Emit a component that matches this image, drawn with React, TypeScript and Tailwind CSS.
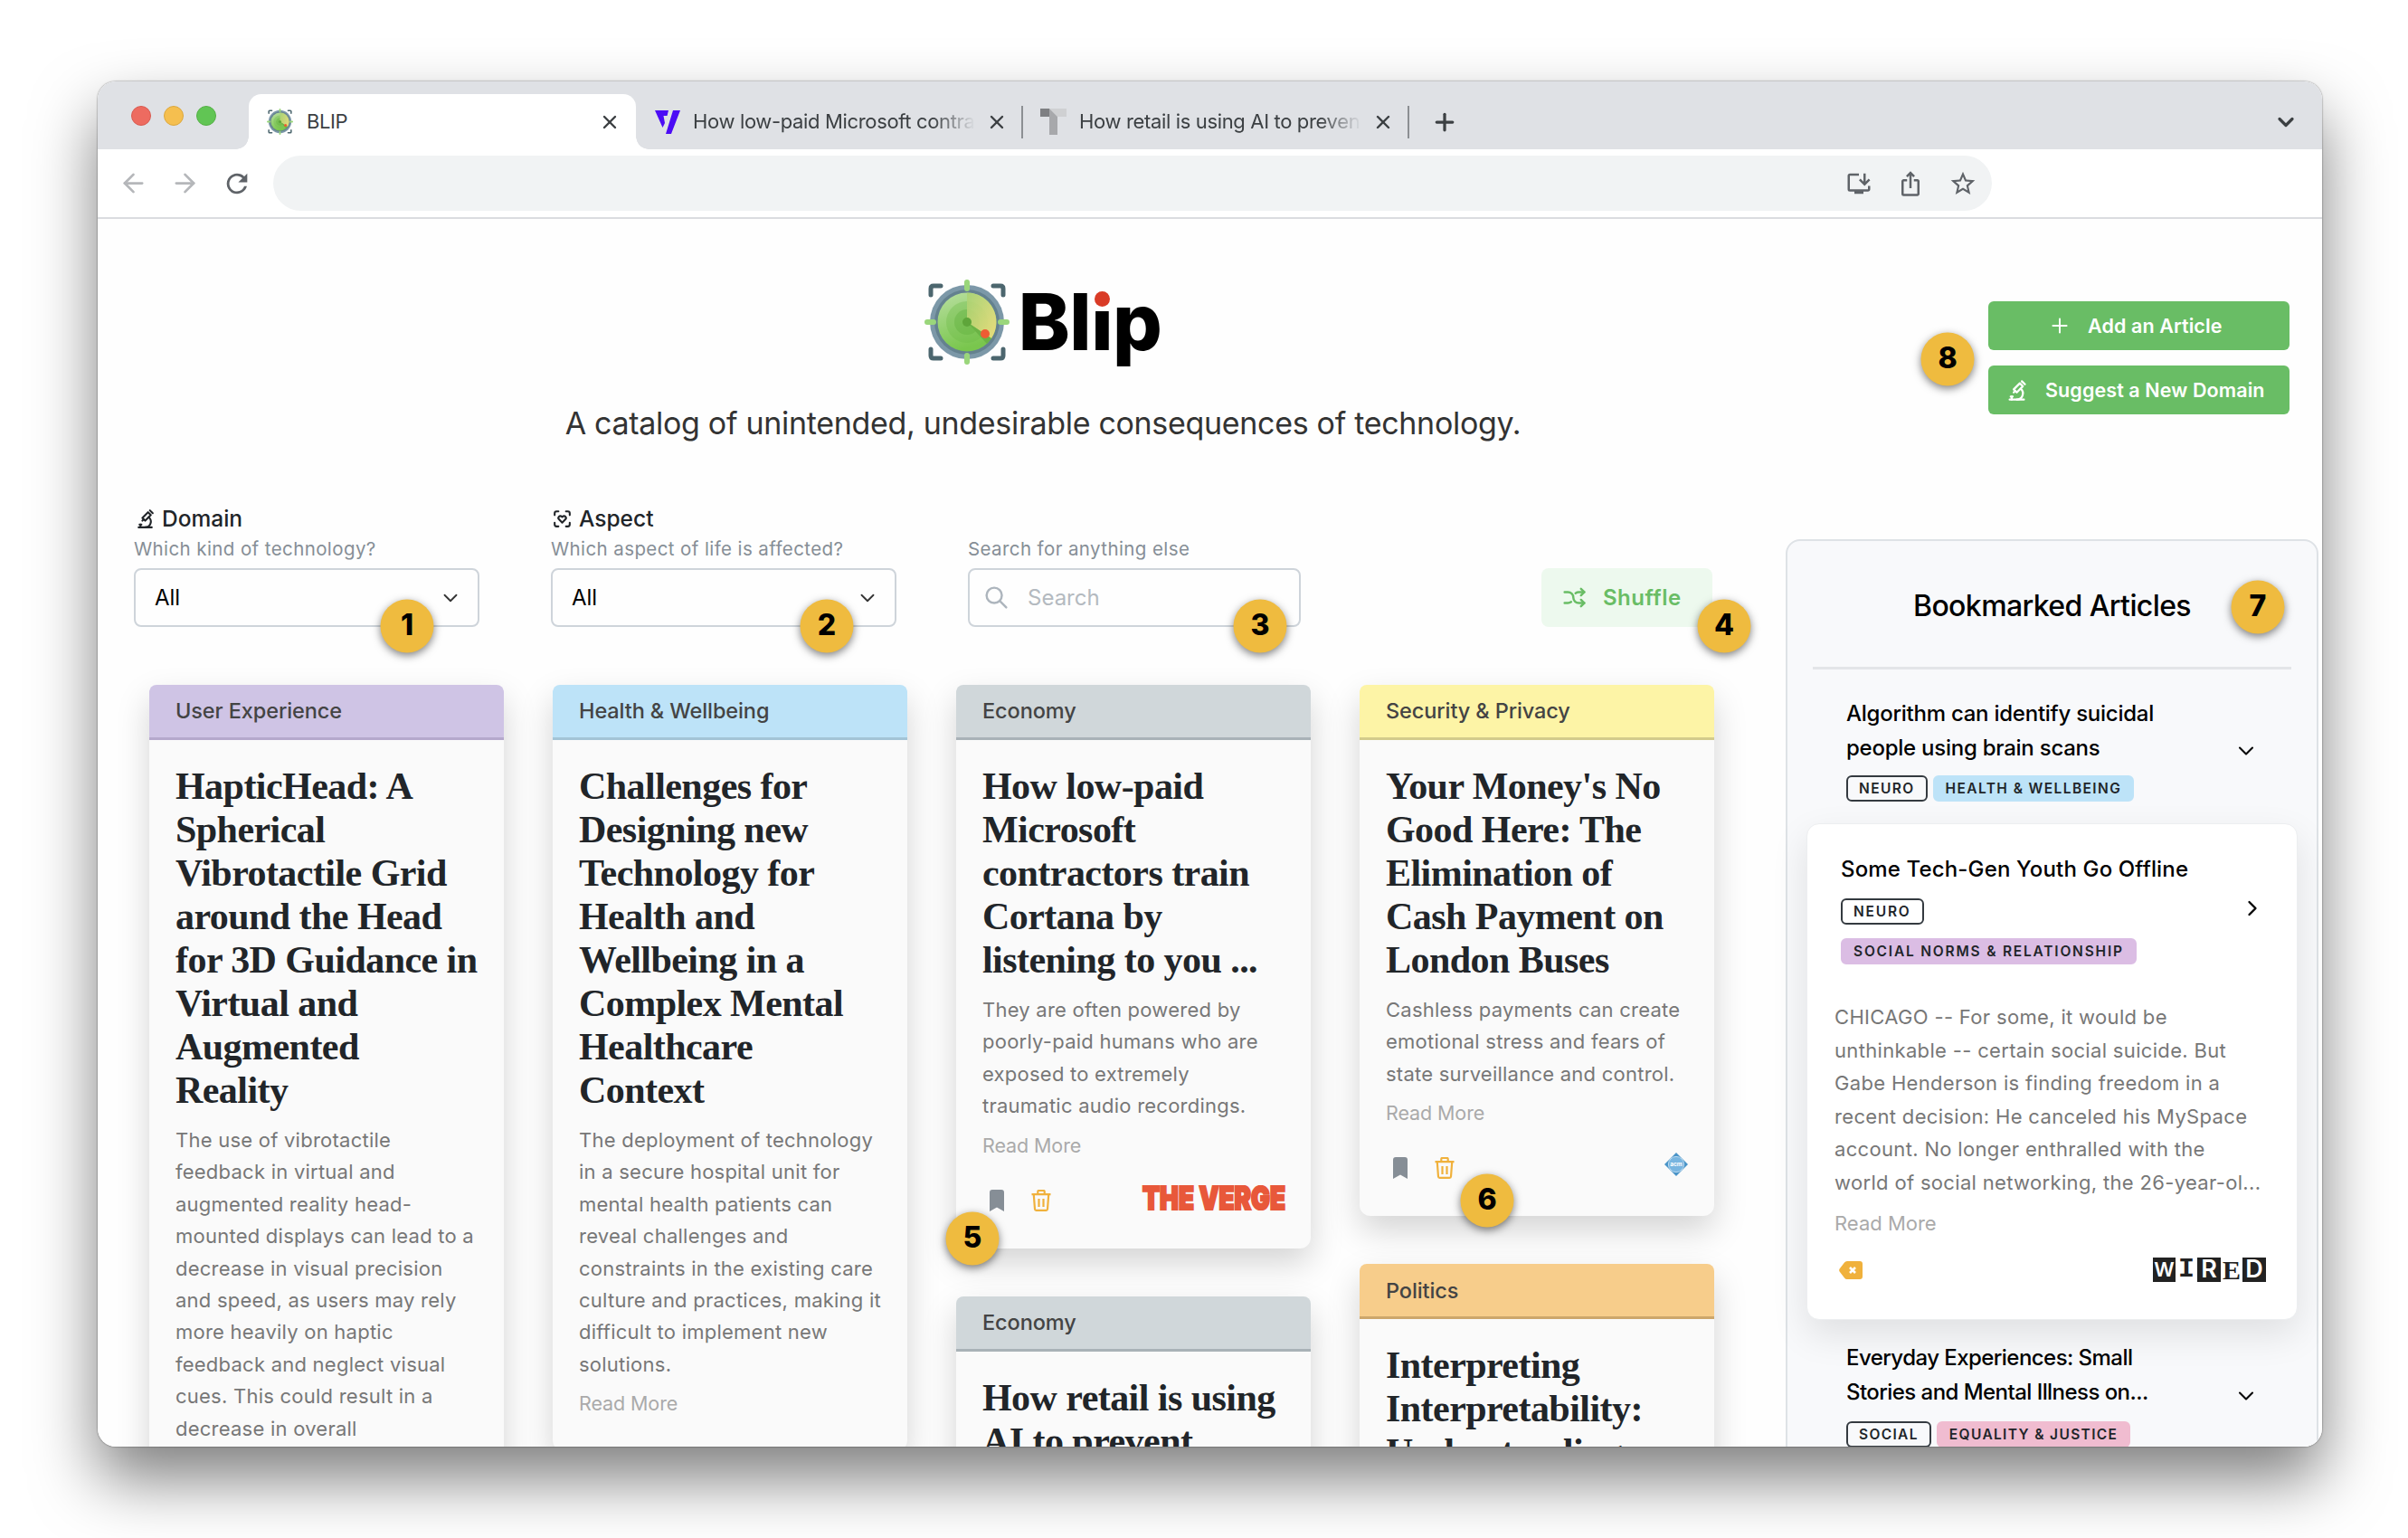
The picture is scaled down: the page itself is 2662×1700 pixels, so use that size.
import type { ReactNode } from "react";
import { MdInstallDesktop, MdIosShare, MdRefresh, MdStarOutline } from "react-icons/md";
import { TbArrowsShuffle, TbHealthRecognition, TbMicroscope, TbSearch } from "react-icons/tb";
import { ArrowLeft, ArrowRight, ChevronDown, ChevronRight, Plus, X } from "lucide-react";

type Article = {
  aspect: string;
  color: string;
  title: string[];
  body?: string[];
  more?: boolean;
  source?: "verge" | "acm";
};

const columns: Article[][] = [
  [
    {
      aspect: "User Experience",
      color: "bg-[#cfc4e5] border-[#b5a8cc]",
      title: ["HapticHead: A", "Spherical", "Vibrotactile Grid", "around the Head", "for 3D Guidance in", "Virtual and", "Augmented", "Reality"],
      body: [
        "The use of vibrotactile",
        "feedback in virtual and",
        "augmented reality head-",
        "mounted displays can lead to a",
        "decrease in visual precision",
        "and speed, as users may rely",
        "more heavily on haptic",
        "feedback and neglect visual",
        "cues. This could result in a",
        "decrease in overall",
      ],
    },
  ],
  [
    {
      aspect: "Health & Wellbeing",
      color: "bg-[#bde3f8] border-[#a3c4d6]",
      title: ["Challenges for", "Designing new", "Technology for", "Health and", "Wellbeing in a", "Complex Mental", "Healthcare", "Context"],
      body: [
        "The deployment of technology",
        "in a secure hospital unit for",
        "mental health patients can",
        "reveal challenges and",
        "constraints in the existing care",
        "culture and practices, making it",
        "difficult to implement new",
        "solutions.",
      ],
      more: true,
    },
  ],
  [
    {
      aspect: "Economy",
      color: "bg-[#d0d7da] border-[#a9b2b7]",
      title: ["How low-paid", "Microsoft", "contractors train", "Cortana by", "listening to you ..."],
      body: ["They are often powered by", "poorly-paid humans who are", "exposed to extremely", "traumatic audio recordings."],
      more: true,
      source: "verge",
    },
    {
      aspect: "Economy",
      color: "bg-[#d0d7da] border-[#a9b2b7]",
      title: ["How retail is using", "AI to prevent"],
    },
  ],
  [
    {
      aspect: "Security & Privacy",
      color: "bg-[#fdf4a6] border-[#d3cb8b]",
      title: ["Your Money's No", "Good Here: The", "Elimination of", "Cash Payment on", "London Buses"],
      body: ["Cashless payments can create", "emotional stress and fears of", "state surveillance and control."],
      more: true,
      source: "acm",
    },
    {
      aspect: "Politics",
      color: "bg-[#f7cd8b] border-[#cda76b]",
      title: ["Interpreting", "Interpretability:", "Understanding"],
    },
  ],
];

const markers = [
  { n: 1, x: 450, y: 692 },
  { n: 2, x: 914, y: 692 },
  { n: 3, x: 1393, y: 692 },
  { n: 4, x: 1906, y: 692 },
  { n: 5, x: 1075, y: 1369 },
  { n: 6, x: 1644, y: 1327 },
  { n: 7, x: 2496, y: 671 },
  { n: 8, x: 2153, y: 397 },
];

function Radar({ className }: { className: string }) {
  return (
    <svg viewBox="0 0 94 94" className={className}>
      <defs>
        <linearGradient id="face" x1="0" y1="0" x2="0.3" y2="1">
          <stop offset="0" stopColor="#b9dfa0" />
          <stop offset="1" stopColor="#79c64d" />
        </linearGradient>
        <linearGradient id="sweep" x1="0" y1="0" x2="1" y2="1">
          <stop offset="0" stopColor="#a8d272" />
          <stop offset="1" stopColor="#fbdf83" />
        </linearGradient>
      </defs>
      <path d="M7 17V10q0-3 3-3h8M76 7h8q3 0 3 3v7M87 77v7q0 3-3 3h-8M18 87h-8q-3 0-3-3v-7" fill="none" stroke="#4c666e" strokeWidth="5" strokeLinecap="round" />
      <circle cx="47" cy="47" r="41" fill="#7c98a8" />
      <circle cx="47" cy="47" r="36" fill="#64818f" />
      <circle cx="47" cy="47" r="32.5" fill="url(#face)" />
      <circle cx="47" cy="47" r="23" fill="#6dbb48" opacity="0.35" />
      <circle cx="47" cy="47" r="14" fill="#5cab3a" opacity="0.35" />
      <path d="M47 14.5A32.5 32.5 0 0 1 74 65L47 47Z" fill="url(#sweep)" opacity="0.85" />
      <path d="M47 47L74 65l-5 6Z" fill="#6bb345" />
      <circle cx="47" cy="47" r="5" fill="#5ea53a" />
      <circle cx="67" cy="60" r="5" fill="#ee5c33" />
      <path d="M47 3v7M47 84v7M3 47h7M84 47h7" stroke="#9ad67b" strokeWidth="6" strokeLinecap="round" />
    </svg>
  );
}

function Bookmark() {
  return (
    <svg viewBox="0 0 16 24" className="ml-2 h-6 w-4">
      <path d="M3 0h10q3 0 3 3v21l-8-4.500L0 24V3q0-3 3-3Z" fill="#868e96" />
    </svg>
  );
}

function Trash() {
  return (
    <svg viewBox="0 0 22 24" className="ml-[30px] h-6 w-[22px]" fill="none" stroke="#f0b13c" strokeWidth="2.200">
      <path d="M0.500 5.200h21M7.300 5V2q0-1 1-1h5.400q1 0 1 1v3M2.800 5.500l1.200 16q.1 1.400 1.500 1.400h11q1.400 0 1.500-1.400l1.200-16M8.500 10v9M13.500 10v9" />
    </svg>
  );
}

function Lines({ lines }: { lines: string[] }) {
  return (
    <>
      {lines.map((l) => (
        <span key={l} className="block whitespace-nowrap">{l}</span>
      ))}
    </>
  );
}

function VergeLogo() {
  return (
    <svg viewBox="0 0 160 28" className="-mt-[5px] -mr-[2px] h-7 w-40">
      <text x="1" y="26.5" textLength="158" lengthAdjust="spacingAndGlyphs" fontFamily="Inter, sans-serif" fontWeight="900" fontSize="35" fill="#e8583a" stroke="#e8583a" strokeWidth="2.4">THE VERGE</text>
    </svg>
  );
}

function AcmLogo() {
  return (
    <svg viewBox="0 0 26 26" className="-mt-[5px] h-[26px] w-[26px]">
      <path d="M13 0L26 13L13 26L0 13Z" fill="#4a94c8" />
      <circle cx="13" cy="13" r="8.6" fill="#78b5e0" stroke="#c5e0f3" strokeWidth="0.9" />
      <text x="13" y="15.4" textAnchor="middle" fontFamily="Inter, sans-serif" fontWeight="700" fontSize="6.5" fill="#fff">acm</text>
    </svg>
  );
}

function ArticleCard({ a }: { a: Article }) {
  return (
    <div className="w-[392px] rounded-t-lg rounded-b-xl bg-[#fafafa] shadow-[0_16px_36px_rgba(0,0,0,0.17)]">
      <div className={`flex h-[61px] items-center rounded-t-lg border-b-[3px] pl-[29px] text-[23.5px] font-medium tracking-[-0.1px] text-[#444] ${a.color}`}>{a.aspect}</div>
      <div className="px-[29px] pt-[27px] pb-10">
        <h2 className="font-['Liberation_Serif',serif] text-[42px]/[48px] font-bold tracking-[-0.55px] text-[#212529]">
          <Lines lines={a.title} />
        </h2>
        {a.body && (
          <p className="mt-[14px] text-[22px]/[35.4px] tracking-[0.24px] text-[#777]">
            <Lines lines={a.body} />
          </p>
        )}
        {a.more && <p className="mt-[12px] text-[21.5px]/[26px] tracking-[-0.1px] text-[#aaa]">Read More</p>}
        {a.source && (
          <div className="mt-9 flex h-[25px] items-start">
            <Bookmark />
            <Trash />
            <div className="ml-auto">{a.source === "verge" ? <VergeLogo /> : <AcmLogo />}</div>
          </div>
        )}
      </div>
    </div>
  );
}

function Tag({ children, className }: { children: string; className: string }) {
  return (
    <span className={`flex h-[29px] items-center rounded-md border-2 text-[15.5px] font-semibold whitespace-nowrap text-[#212529] ${className}`}>{children}</span>
  );
}

function Filter({ icon, label, hint }: { icon: ReactNode; label: string; hint: string }) {
  return (
    <div className="w-[382px]">
      <div className="flex h-[30px] items-center gap-1.5 text-[24.5px] font-medium text-[#212529]">
        {icon}
        {label}
      </div>
      <div className="mb-0.5 h-[38px] text-[20.5px]/[38px] tracking-[0.4px] whitespace-nowrap text-[#868e96]">{hint}</div>
      <div className="flex h-[65px] items-center justify-between rounded-lg border-2 border-[#ced4da] pr-[17px] pl-[21px] text-[24px] text-black">
        All
        <ChevronDown className="h-[26px] w-[26px] text-[#333]" strokeWidth={1.7} />
      </div>
    </div>
  );
}

function TabBar() {
  return (
    <div className="flex h-[75px] items-end bg-[#dfe1e5]">
      <div className="flex h-[74px] w-[167px] items-center gap-[14px] pl-[37px]">
        <span className="h-[22px] w-[22px] rounded-full border border-[#d95a50] bg-[#ed6b60]" />
        <span className="h-[22px] w-[22px] rounded-full border border-[#dca73c] bg-[#f5bf4f]" />
        <span className="h-[22px] w-[22px] rounded-full border border-[#54b045] bg-[#61c554]" />
      </div>
      <div className="relative flex h-[61px] w-[428px] items-center rounded-t-[14px] bg-white pl-[20px] text-[22px] text-[#3c4043]">
        <Radar className="h-[29px] w-[29px]" />
        <span className="ml-[15px] tracking-[-0.4px]">BLIP</span>
        <X className="mr-[17px] ml-auto h-6 w-6" strokeWidth={2.4} />
        <span className="absolute bottom-0 -left-3.5 h-3.5 w-3.5 bg-[radial-gradient(circle_at_0_0,transparent_13.5px,white_14px)]" />
        <span className="absolute -right-3.5 bottom-0 h-3.5 w-3.5 bg-[radial-gradient(circle_at_100%_0,transparent_13.5px,white_14px)]" />
      </div>
      <div className="flex h-[61px] w-[428px] items-center pl-[21px] text-[22px] tracking-[-0.35px] text-[#3c4043]">
        <svg viewBox="0 0 28 26" className="h-[26px] w-7">
          <path d="M0 0h15l-1.500 6h-4l1.500 8-2.500 5ZM20 0h8L18 26h-6Z" fill="#4c0cf5" />
        </svg>
        <span className="ml-[14px] w-[312px] overflow-hidden [mask-image:linear-gradient(to_right,black_85%,transparent)] whitespace-nowrap">How low-paid Microsoft contra</span>
        <X className="ml-[12px] h-6 w-6" strokeWidth={2.4} />
        <span className="ml-auto h-9 w-0.5 bg-[#8c8f93]" />
      </div>
      <div className="flex h-[61px] w-[427px] items-center pl-[19px] text-[22px] tracking-[-0.35px] text-[#3c4043]">
        <svg viewBox="0 0 29 29" className="h-[29px] w-[29px]">
          <path d="M0 0h10v9H0Z" fill="#7e7f82" />
          <path d="M10 0h19v9H19Z" fill="#cfd0d2" />
          <path d="M10 0l9 9v20h-9Z" fill="#a7a8ab" />
        </svg>
        <span className="ml-[14px] w-[312px] overflow-hidden [mask-image:linear-gradient(to_right,black_85%,transparent)] whitespace-nowrap">How retail is using AI to preven</span>
        <X className="ml-[12px] h-6 w-6" strokeWidth={2.4} />
        <span className="ml-auto h-9 w-0.5 bg-[#8c8f93]" />
      </div>
      <div className="flex h-[61px] flex-1 items-center justify-between pr-[26px] pl-[24px] text-[#3c4043]">
        <Plus className="h-[30px] w-[30px]" strokeWidth={2.6} />
        <ChevronDown className="h-[28px] w-[28px]" strokeWidth={2.8} />
      </div>
    </div>
  );
}

function Toolbar() {
  return (
    <div className="flex h-[77px] items-center border-b-2 border-[#dadce0] bg-white pl-[23px] text-[#5f6368]">
      <ArrowLeft className="h-[33px] w-[33px] text-[#b5b7ba]" strokeWidth={2} />
      <ArrowRight className="ml-[24px] h-[33px] w-[33px] text-[#b5b7ba]" strokeWidth={2} />
      <MdRefresh className="ml-[24px] h-[34px] w-[34px]" />
      <div className="ml-[23px] flex h-[61px] w-[1900px] items-center justify-end gap-[27px] rounded-full bg-[#f1f3f4] pr-[16px]">
        <MdInstallDesktop className="h-[30px] w-[30px]" />
        <MdIosShare className="h-[30px] w-[30px]" />
        <MdStarOutline className="h-[32px] w-[32px]" />
      </div>
    </div>
  );
}

function Sidebar() {
  return (
    <aside className="mt-[38px] h-[1020px] w-[589px] shrink-0 rounded-2xl border-2 border-[#dee2e6] bg-[#f8f9fb]">
      <h2 className="mt-[50px] text-center text-[32px]/[44px] font-medium tracking-[-0.6px] text-black">Bookmarked Articles</h2>
      <hr className="mx-7 mt-[45px] border-t-[3px] border-[#e3e5e8]" />

      <div className="mt-[30px] ml-[65px] flex items-center">
        <div className="w-[428px]">
          <h3 className="text-[24px]/[38px] font-medium tracking-[-0.25px] text-black">
            <Lines lines={["Algorithm can identify suicidal", "people using brain scans"]} />
          </h3>
          <div className="mt-[11px] flex gap-1.5">
            <Tag className="border-[#343a40] px-3 tracking-[1.4px]">NEURO</Tag>
            <Tag className="border-[#bde3f8] bg-[#bde3f8] px-3 tracking-[1.4px]">HEALTH & WELLBEING</Tag>
          </div>
        </div>
        <ChevronDown className="mt-[3px] h-7 w-7" strokeWidth={1.8} />
      </div>

      <div className="mt-[24px] ml-[21px] h-[549px] w-[543px] rounded-[14px] border border-[#eceef0] bg-white px-[30px] pt-[31px] shadow-[0_16px_40px_rgba(0,0,0,0.1)]">
        <div className="ml-[7px] flex items-center justify-between">
          <div>
            <h3 className="text-[24px]/[38px] font-medium tracking-[0.15px] whitespace-nowrap text-black">Some Tech-Gen Youth Go Offline</h3>
            <div className="mt-[13px] flex flex-col items-start gap-[15px]">
              <Tag className="border-[#343a40] px-3 tracking-[1.8px]">NEURO</Tag>
              <Tag className="border-[#dbbde4] bg-[#dbbde4] px-3 tracking-[1.8px]">SOCIAL NORMS & RELATIONSHIP</Tag>
            </div>
          </div>
          <ChevronRight className="mr-[5px] h-7 w-7" strokeWidth={2} />
        </div>
        <p className="mt-[40px] text-[22px]/[36.5px] tracking-[0.33px] text-[#777]">
          <Lines
            lines={[
              "CHICAGO -- For some, it would be",
              "unthinkable -- certain social suicide. But",
              "Gabe Henderson is finding freedom in a",
              "recent decision: He canceled his MySpace",
              "account. No longer enthralled with the",
              "world of social networking, the 26-year-ol...",
            ]}
          />
        </p>
        <p className="mt-[13px] text-[22px]/[28px] text-[#aaa]">Read More</p>
        <div className="mt-6 flex items-center justify-between pr-[4px] pl-[5px]">
          <svg viewBox="0 0 26 20" className="h-5 w-[26px]">
            <path d="M9 0h14q3 0 3 3v14q0 3-3 3H9q-2 0-3-1.500L0.600 11.500q-.9-1.500 0-3L6 1.500Q7 0 9 0Z" fill="#f0b13c" />
            <path d="M12 7l6 6M18 7l-6 6" stroke="#fff" strokeWidth="2.6" />
          </svg>
          <div className="flex h-[27px] items-center text-[26px] font-bold text-[#222]">
            <span className="flex h-[27px] w-[25px] items-center justify-center bg-[#222] text-[22px] font-semibold text-white">W</span>
            <span className="w-6 text-center font-['Liberation_Mono',monospace] text-[30px]/[27px]">I</span>
            <span className="flex h-[27px] w-[26px] items-center justify-center bg-[#222] text-[27px] font-semibold text-white">R</span>
            <span className="w-[24px] text-center font-['Liberation_Serif',serif] text-[30px]/[27px]">E</span>
            <span className="flex h-[27px] w-[26px] items-center justify-center bg-[#222] text-[27px] font-semibold text-white">D</span>
          </div>
        </div>
      </div>

      <div className="mt-[23px] ml-[65px] flex items-center">
        <div className="w-[428px]">
          <h3 className="text-[24px]/[38px] font-medium tracking-[-0.55px] text-black">
            <Lines lines={["Everyday Experiences: Small", "Stories and Mental Illness on..."]} />
          </h3>
          <div className="mt-[13px] flex gap-1.5">
            <Tag className="border-[#343a40] px-3 tracking-[1.35px]">SOCIAL</Tag>
            <Tag className="border-[#f0bcd0] bg-[#f0bcd0] px-3 tracking-[1.35px]">EQUALITY & JUSTICE</Tag>
          </div>
        </div>
        <ChevronDown className="mt-[3px] h-7 w-7" strokeWidth={1.8} />
      </div>
    </aside>
  );
}

export default function App() {
  return (
    <div className="relative h-[1700px] w-[2662px] overflow-hidden bg-white pt-[90px] pl-[108px] font-['Inter',sans-serif]">
      <div className="h-[1509px] w-[2459px] rounded-[20px] shadow-[0_0_2px_rgba(0,0,0,0.6),0_36px_70px_rgba(0,0,0,0.5)]">
        <div className="h-[1509px] w-[2459px] overflow-hidden rounded-[20px] bg-[#fefefe]">
          <TabBar />
          <Toolbar />

          {/* Header */}
          <header className="flex h-[316px] items-start">
            <div className="flex w-[2090px] flex-col items-center pt-[67px]">
              <div className="flex h-[94px] items-center">
                <Radar className="h-[94px] w-[94px]" />
                <div className="relative ml-[10px] text-[86px]/[94px] font-extrabold tracking-[-0.5px] text-black">
                  Blip
                  <span className="absolute top-[5px] left-[82px] flex h-[30px] w-[21px] items-end justify-center bg-[#fefefe] pb-[5px]">
                    <span className="h-[17px] w-[17px] rounded-full bg-[#d93b26]" />
                  </span>
                </div>
              </div>
              <p className="mt-[41px] text-[34px]/[48px] tracking-[-0.31px] whitespace-nowrap text-[#333]">A catalog of unintended, undesirable consequences of technology.</p>
            </div>
            <div className="mt-[91px] flex w-[333px] flex-col gap-[17px] text-[21.5px] font-semibold tracking-[0.1px] text-white">
              <button className="flex h-[54px] items-center rounded-md bg-[#69bd65] pl-[66px]">
                <Plus className="h-[26px] w-[26px]" strokeWidth={1.8} />
                <span className="ml-[18px]">Add an Article</span>
              </button>
              <button className="flex h-[54px] items-center rounded-md bg-[#69bd65] pl-[18px]">
                <TbMicroscope className="h-[27px] w-[27px]" />
                <span className="ml-[18px] whitespace-nowrap">Suggest a New Domain</span>
              </button>
            </div>
          </header>

          <div className="flex items-start">
            <main className="w-[1866px] shrink-0">
              {/* Filters */}
              <div className="flex items-end pr-[81px] pl-10">
                <Filter icon={<TbMicroscope className="h-[25px] w-[25px]" />} label="Domain" hint="Which kind of technology?" />
                <div className="w-[79px]" />
                <Filter icon={<TbHealthRecognition className="h-[25px] w-[25px]" />} label="Aspect" hint="Which aspect of life is affected?" />
                <div className="w-[79px]" />
                <div className="w-[368px]">
                  <div className="mb-0.5 h-[38px] text-[20.5px]/[38px] tracking-[0.4px] whitespace-nowrap text-[#868e96]">Search for anything else</div>
                  <div className="flex h-[65px] items-center gap-[20px] rounded-lg border-2 border-[#ced4da] px-[15px] text-[24px] text-[#b4bac0]">
                    <TbSearch className="h-[29px] w-[29px] text-[#adb5bd]" />
                    Search
                  </div>
                </div>
                <div className="ml-auto flex h-[65px] w-[189px] items-center rounded-lg bg-[#edf9ee] pl-[22px] text-[24px] font-semibold tracking-[0.5px] text-[#69bd65]">
                  <TbArrowsShuffle className="mr-[17px] h-[29px] w-[29px]" />
                  Shuffle
                </div>
              </div>

              {/* Article columns */}
              <div className="mt-16 flex gap-[54px] pl-[57px]">
                {columns.map((col, i) => (
                  <div key={i} className="flex flex-col gap-[53px]">
                    {col.map((a) => (
                      <ArticleCard key={a.title[0]} a={a} />
                    ))}
                  </div>
                ))}
              </div>
            </main>
            <Sidebar />
          </div>
        </div>
      </div>

      {/* Numbered callouts */}
      {markers.map((m) => (
        <div
          key={m.n}
          className="absolute flex h-[59px] w-[59px] -translate-x-1/2 -translate-y-1/2 items-center justify-center rounded-full bg-[#efbb3f] pb-[3px] text-[32px] font-extrabold text-black shadow-[0_3px_10px_rgba(0,0,0,0.5)]"
          style={{ left: m.x, top: m.y }}
        >
          {m.n}
        </div>
      ))}
    </div>
  );
}
